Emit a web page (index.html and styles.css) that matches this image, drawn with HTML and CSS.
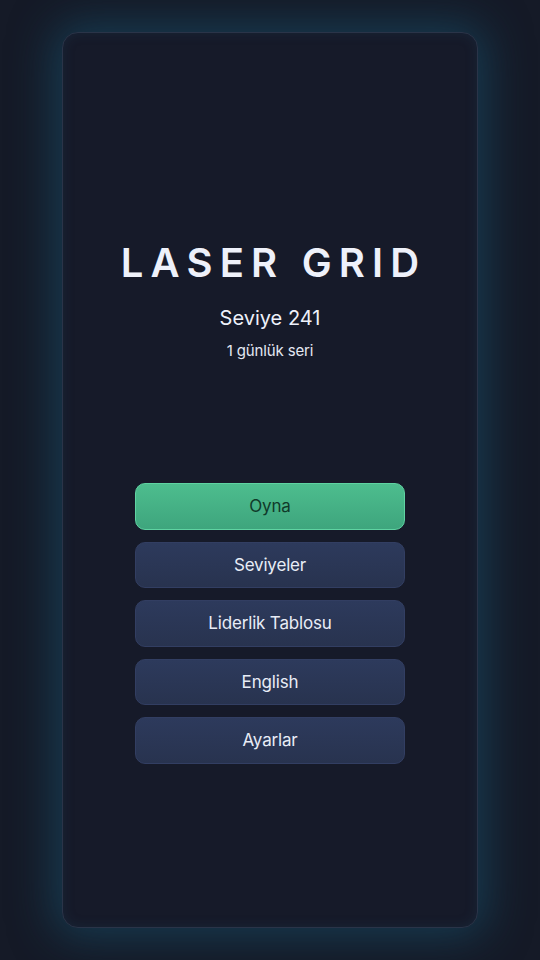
FILE: index.html
```html
<!DOCTYPE html>
<html lang="tr">
<head>
<meta charset="utf-8">
<title>Laser Grid</title>
<link rel="stylesheet" href="styles.css">
</head>
<body>
<main class="card">
  <h1 class="title">LASER GRID</h1>
  <p class="level">Seviye 241</p>
  <p class="streak">1 günlük seri</p>
  <nav class="menu">
    <button class="btn btn-primary">Oyna</button>
    <button class="btn">Seviyeler</button>
    <button class="btn">Liderlik Tablosu</button>
    <button class="btn">English</button>
    <button class="btn">Ayarlar</button>
  </nav>
</main>
</body>
</html>
```
FILE: styles.css
```css
html, body {
  margin: 0;
  padding: 0;
}
body {
  width: 540px;
  height: 960px;
  background: #151a27;
  font-family: Inter, "Noto Sans", sans-serif;
  display: flex;
  justify-content: center;
  padding-top: 32px;
  box-sizing: border-box;
  overflow: hidden;
}
.card {
  width: 416px;
  height: 896px;
  box-sizing: border-box;
  background: #161a29;
  border: 1px solid #2a3448;
  border-radius: 16px;
  box-shadow: 0 0 44px 8px rgba(24, 88, 116, 0.55), inset 0 0 12px rgba(30, 70, 100, 0.25);
  display: flex;
  flex-direction: column;
  align-items: center;
  padding-top: 206px;
}
.title {
  margin: 0;
  font-size: 40px;
  line-height: 48px;
  font-weight: 600;
  letter-spacing: 0.18em;
  margin-right: -0.18em;
  color: #eef1fa;
}
.level {
  margin: 17px 0 0;
  font-size: 20px;
  line-height: 28px;
  font-weight: 400;
  color: #eef1fa;
}
.streak {
  margin: 9px 0 0;
  font-size: 15px;
  line-height: 20px;
  color: #e4e8f2;
  letter-spacing: -0.01em;
}
.menu {
  margin-top: 122px;
  width: 270px;
  display: flex;
  flex-direction: column;
  gap: 12px;
}
.btn {
  height: 46.5px;
  border-radius: 10px;
  border: 1px solid #323e62;
  background: linear-gradient(180deg, #2d3a5c 0%, #28334f 100%);
  color: #e8ecf6;
  font-family: inherit;
  font-size: 17px;
  font-weight: 400;
  letter-spacing: -0.01em;
  padding: 0;
}
.btn-primary {
  border-color: #5fd3a2;
  background: linear-gradient(180deg, #4dbd8e 0%, #3ea57d 100%);
  color: #103a2a;
}
```
